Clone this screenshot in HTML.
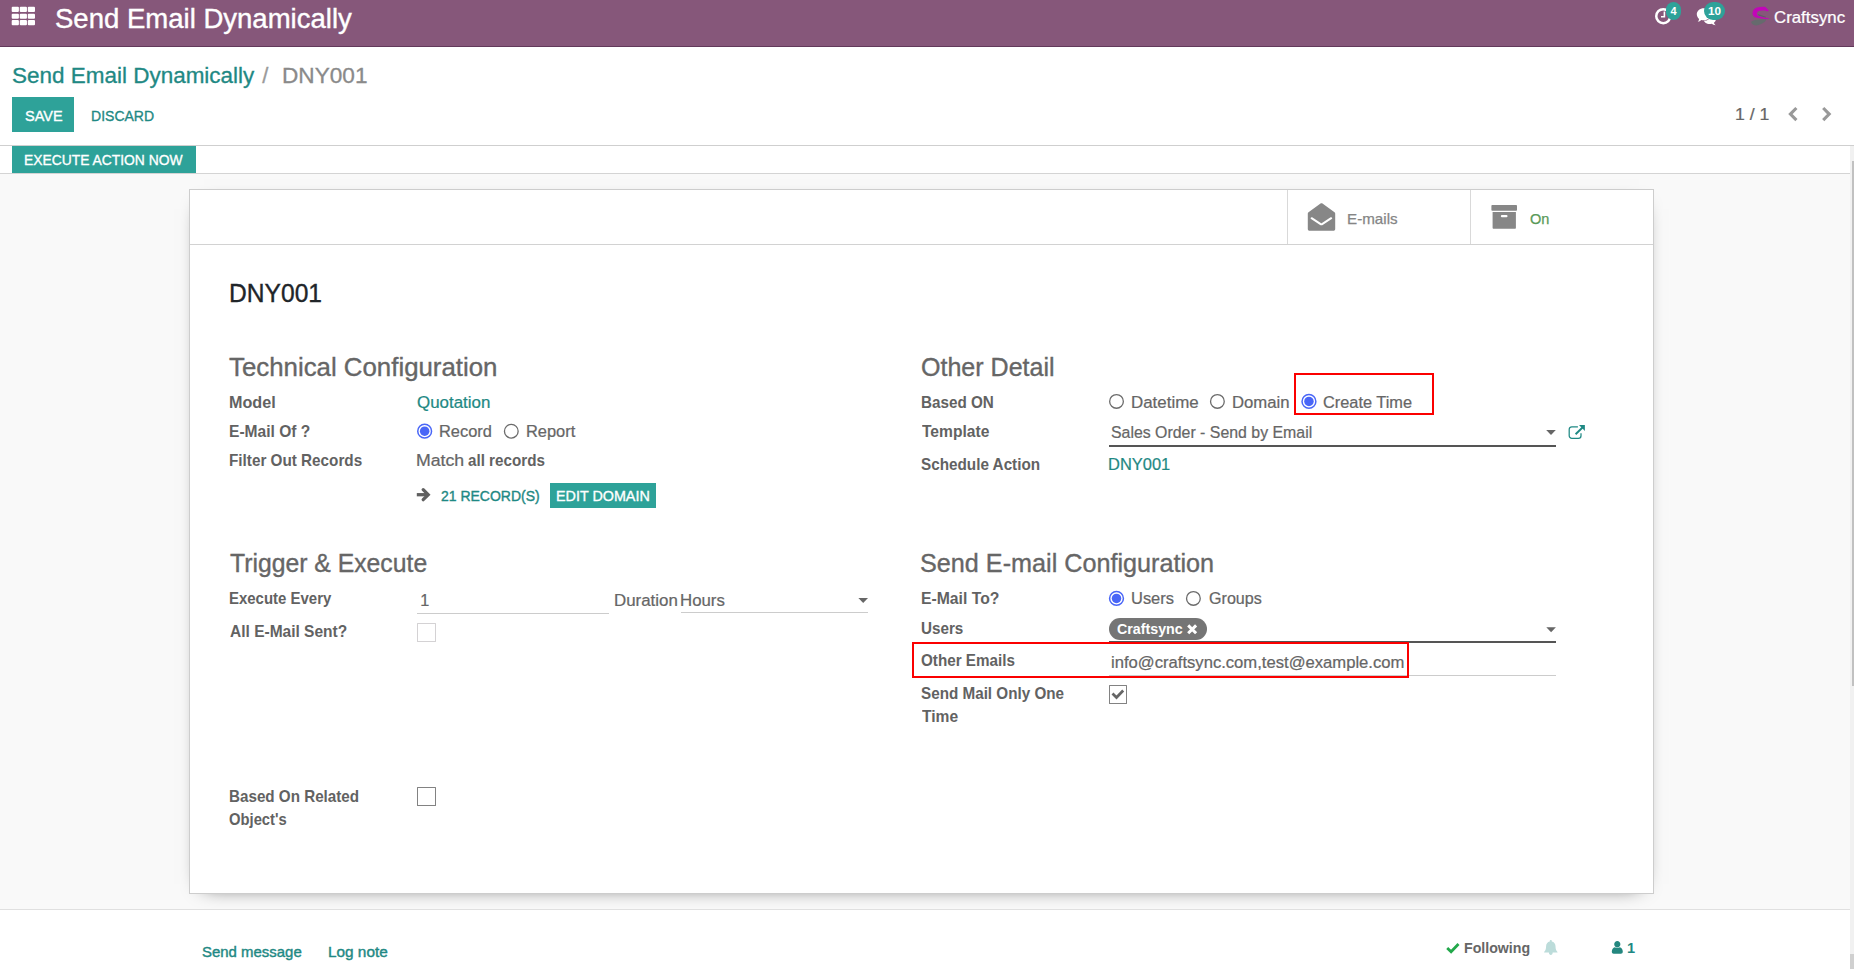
<!DOCTYPE html>
<html lang="en">
<head>
<meta charset="utf-8">
<title>DNY001 - Send Email Dynamically</title>
<style>
html,body{margin:0;padding:0;}
body{width:1854px;height:969px;overflow:hidden;position:relative;background:#f9f9f9;font-family:"Liberation Sans",sans-serif;color:#666;}
.abs{position:absolute;}
.t{position:absolute;white-space:pre;line-height:1;transform-origin:0 0;}
.navbar{left:0;top:0;width:1854px;height:46px;background:#86577a;border-bottom:1px solid #62395b;}
.cp{left:0;top:47px;width:1854px;height:98px;background:#fff;border-bottom:1px solid #cfcfcf;}
.sb{left:0;top:146px;width:1850px;height:27px;background:#fff;border-bottom:1px solid #d4d4d4;}
.btn{background:#2ea299;}
.sheet{left:189px;top:189px;width:1463px;height:703px;background:#fff;border:1px solid #cdcdcd;box-shadow:0 5px 20px -15px #000;}
.bbox{left:190px;top:190px;width:1463px;height:54px;border-bottom:1px solid #d2d2d2;}
.vline{width:1px;height:54px;top:190px;background:#d9d9d9;}
.chat{left:0;top:909px;width:1850px;height:60px;background:#fff;border-top:1px solid #e0e0e0;}
.track{left:1850px;top:146px;width:4px;height:823px;background:#f1f1f1;}
.thumb{left:1852px;top:161px;width:2px;height:525px;background:#c1c1c1;}
.corner{left:1850px;top:954px;width:4px;height:15px;background:#d0d0d0;}
.cb{width:17px;height:17px;border:1px solid #828282;background:#fff;border-radius:0.5px;}
.cb.dis{border-color:#d4d2d4;}
.uline{height:1px;background:#cccccc;}
.uline2{height:2px;background:#555555;}
.red{border:2px solid #fb0000;box-sizing:border-box;}
.badge{background:#2ea299;border-radius:9px;height:18px;top:2px;}
svg{position:absolute;overflow:visible;}
</style>
</head>
<body>
<!-- navbar -->
<div class="abs navbar"></div>
<svg style="left:0;top:0" width="50" height="46" viewBox="0 0 50 46"><g fill="#fff">
<rect x="11.7" y="6.8" width="7.2" height="5.1" rx="1"/><rect x="19.75" y="6.8" width="7.2" height="5.1" rx="1"/><rect x="27.8" y="6.8" width="7.2" height="5.1" rx="1"/>
<rect x="11.7" y="13.75" width="7.2" height="5.1" rx="1"/><rect x="19.75" y="13.75" width="7.2" height="5.1" rx="1"/><rect x="27.8" y="13.75" width="7.2" height="5.1" rx="1"/>
<rect x="11.7" y="20.1" width="7.2" height="5.1" rx="1"/><rect x="19.75" y="20.1" width="7.2" height="5.1" rx="1"/><rect x="27.8" y="20.1" width="7.2" height="5.1" rx="1"/>
</g></svg>
<!-- clock icon -->
<svg style="left:1650px;top:0" width="80" height="46" viewBox="1650 0 80 46">
<circle cx="1663.3" cy="16.2" r="7.05" fill="none" stroke="#fff" stroke-width="2.5"/>
<path d="M1663.600 11.600h1.600v6h-4.200v-1.500h2.600z" fill="#fff"/>
<!-- comments icon -->
<path d="M1709.800 14.400c3.400 0 6.100 2.100 6.100 4.800 0 1.500-.8 2.700-2 3.600.2.800.7 1.600 1.700 2.400-1.600-.1-2.900-.7-3.800-1.500-.6.200-1.300.300-2 .300-3.400 0-6.100-2.100-6.100-4.800s2.700-4.800 6.100-4.800z" fill="#fff"/>
<path d="M1703.800 8.300c3.900 0 7 2.700 7 6s-3.100 6-7 6c-.9 0-1.700-.1-2.500-.4-.9.900-2.100 1.600-3.600 1.900.9-.9 1.300-1.900 1.400-2.900-1.400-1.100-2.300-2.700-2.300-4.600 0-3.300 3.100-6 7-6z" fill="#fff" stroke="#86577a" stroke-width="1.100" paint-order="stroke"/>
</svg>
<div class="abs badge" style="left:1666px;width:15px;"></div>
<div class="abs badge" style="left:1704px;width:21px;"></div>
<!-- logo -->
<svg style="left:1745px;top:0" width="30" height="46" viewBox="1745 0 30 46">
<path d="M1751.100 22c.9-1.200 2.700-1.800 4.500-2.100 3.400-.5 7.400-.7 10.700-.6-.3 1.500-1.100 2.300-2.100 3-2.200 1.600-4.700 2.700-7.800 3.100-2.400.1-4.900-1.200-5.300-3.400z" fill="#666a6d"/>
<path d="M1758 14l7.900 2.700-.3 1-7.100-2.300z" fill="#5b6163"/>
<path d="M1765.400 6.900l3.500 3.700-1.900.9-1-.8c-3-.4-6-.1-8.100.8-1.100 1-1.300 3 0 4.100 2.100 1.200 5.600 2.200 11 2.800l-.2.500c-4.700.1-9.700-.3-13.100-1.300-2.400-1.100-3.400-2.800-3.100-4.600.3-2.500 1.500-4.200 3.600-5.200 2.900-.9 6.400-1.100 9.300-.9z" fill="#c206b8"/>
</svg>
<!-- control panel -->
<div class="abs cp"></div>
<div class="abs btn" style="left:12px;top:97px;width:62px;height:35px;"></div>
<!-- pager chevrons -->
<svg style="left:1780px;top:100px" width="60" height="30" viewBox="1780 100 60 30"><g fill="none" stroke="#999" stroke-width="3.1">
<path d="M1796.400 108l-6 6.100 6 6.100"/><path d="M1823.200 108l6 6.100-6 6.100"/></g></svg>
<!-- status bar -->
<div class="abs sb"></div>
<div class="abs btn" style="left:12px;top:146px;width:184px;height:27px;"></div>
<!-- scrollbar -->
<div class="abs track"></div><div class="abs thumb"></div><div class="abs corner"></div>
<!-- sheet -->
<div class="abs sheet"></div>
<div class="abs bbox"></div>
<div class="abs vline" style="left:1287px;"></div>
<div class="abs vline" style="left:1470px;"></div>
<!-- envelope-open -->
<svg style="left:1300px;top:195px" width="45" height="45" viewBox="1300 195 45 45">
<path d="M1307.800 213.600c0-.6.300-1.100.7-1.400l12-8.700c.6-.4 1.400-.4 2 0l12 8.700c.4.300.7.800.7 1.400v15.400c0 1-.8 1.800-1.800 1.800h-23.800c-1 0-1.800-.8-1.800-1.800z" fill="#878787"/>
<path d="M1311.600 218.200l8.700 5.700c.7.450 1.500.450 2.200 0l8.700-5.700" fill="none" stroke="#fff" stroke-width="2" stroke-linecap="round"/>
</svg>
<!-- archive -->
<svg style="left:1485px;top:195px" width="45" height="45" viewBox="1485 195 45 45">
<rect x="1491.400" y="205" width="25.600" height="5.800" rx="0.8" fill="#878787"/>
<path d="M1492.600 212.100h23.300v15.700c0 .6-.4 1-1 1h-21.300c-.6 0-1-.4-1-1z" fill="#878787"/>
<rect x="1500.900" y="215" width="6.600" height="2.300" rx="1" fill="#fff"/>
</svg>
<!-- radios left -->
<!-- radios -->
<svg style="left:0;top:0" width="1854" height="969" viewBox="0 0 1854 969"><circle cx="424.65" cy="431.2" r="6.900" fill="#fff" stroke="#4966f7" stroke-width="1.500"/><circle cx="424.65" cy="431.2" r="4.750" fill="#4966f7"/><circle cx="511.3" cy="431.2" r="6.850" fill="#fff" stroke="#6b6b6b" stroke-width="1.300"/><circle cx="1116.5" cy="401.4" r="6.850" fill="#fff" stroke="#6b6b6b" stroke-width="1.300"/><circle cx="1217.4" cy="401.4" r="6.850" fill="#fff" stroke="#6b6b6b" stroke-width="1.300"/><circle cx="1308.95" cy="401.4" r="6.900" fill="#fff" stroke="#4966f7" stroke-width="1.500"/><circle cx="1308.95" cy="401.4" r="4.750" fill="#4966f7"/><circle cx="1116.5" cy="598.4" r="6.900" fill="#fff" stroke="#4966f7" stroke-width="1.500"/><circle cx="1116.5" cy="598.4" r="4.750" fill="#4966f7"/><circle cx="1193.4" cy="598.4" r="6.850" fill="#fff" stroke="#6b6b6b" stroke-width="1.300"/></svg>
<!-- arrow right -->
<svg style="left:410px;top:485px" width="30" height="22" viewBox="410 485 30 22">
<path d="M416.800 494.700h10.500" fill="none" stroke="#606060" stroke-width="3.300"/>
<path d="M423.200 489.700l5 5-5 5" fill="none" stroke="#606060" stroke-width="3.300" stroke-linecap="round" stroke-linejoin="miter"/>
</svg>
<div class="abs btn" style="left:550px;top:483px;width:106px;height:25px;"></div>
<!-- trigger -->
<div class="abs uline" style="left:417px;top:613px;width:192px;"></div>
<div class="abs uline" style="left:681px;top:612px;width:187px;"></div>
<svg style="left:855px;top:595px" width="16" height="12" viewBox="855 595 16 12"><path d="M858.400 598h9.600l-4.800 4.900z" fill="#666"/></svg>
<div class="abs cb dis" style="left:417px;top:623px;"></div>
<div class="abs cb" style="left:417px;top:787px;"></div>
<!-- other detail -->
<div class="abs red" style="left:1294px;top:373px;width:140px;height:42px;"></div>
<div class="abs uline2" style="left:1109px;top:445px;width:447px;"></div>
<svg style="left:1540px;top:425px" width="16" height="12" viewBox="1540 425 16 12"><path d="M1546.200 430h9.600l-4.800 4.900z" fill="#666"/></svg>
<!-- external link -->
<svg style="left:1565px;top:420px" width="25" height="22" viewBox="1565 420 25 22">
<path d="M1577.900 426.800H1571.800A2.600 2.600 0 0 0 1569.200 429.400V435.700A2.600 2.600 0 0 0 1571.800 438.300H1578.400A2.600 2.600 0 0 0 1581 435.700V433.200" fill="none" stroke="#1f8984" stroke-width="1.250"/>
<path d="M1575.600 434.200L1582.500 427.500" fill="none" stroke="#1f8984" stroke-width="1.900"/>
<path d="M1579 425.100h5.900v5.800z" fill="#1f8984"/>
</svg>
<!-- send config -->
<div class="abs" style="left:1108.800px;top:618px;width:98.200px;height:22px;border-radius:11px;background:#757575;"></div>
<svg style="left:1185px;top:620px" width="16" height="18" viewBox="1185 620 16 18"><path d="M1188.200 625.400l7.900 7.900M1196.100 625.400l-7.900 7.900" stroke="#fff" stroke-width="3" fill="none"/></svg>
<div class="abs uline2" style="left:1109px;top:641px;width:447px;"></div>
<svg style="left:1540px;top:622px" width="16" height="12" viewBox="1540 622 16 12"><path d="M1546.300 627.300h9.600l-4.800 4.900z" fill="#666"/></svg>
<div class="abs uline" style="left:1109px;top:675px;width:447px;"></div>
<div class="abs red" style="left:912px;top:642px;width:497px;height:36px;"></div>
<div class="abs cb" style="left:1109px;top:685px;width:16px;"></div>
<svg style="left:1109px;top:685px" width="19" height="19" viewBox="0 0 19 19"><path d="M3.500 8.500l4 4 6.700-7" fill="none" stroke="#666" stroke-width="2.700"/></svg>
<!-- chatter -->
<div class="abs chat"></div>
<svg style="left:1440px;top:935px" width="200" height="30" viewBox="1440 935 200 30">
<path d="M1447.200 948l3.900 3.800 7.400-7.800" fill="none" stroke="#22a84a" stroke-width="2.800"/>
<path d="M1550.800 940c.6 0 1 .4 1 1v.4c2.300.5 3.700 2.400 3.700 4.800 0 3.200.9 4.700 2 5.700v.7h-13.400v-.7c1.100-1 2-2.500 2-5.700 0-2.400 1.400-4.300 3.700-4.800v-.4c0-.6.400-1 1-1zM1548.900 952.600h3.800c0 1.500-.8 2.500-1.900 2.500s-1.900-1-1.900-2.500z" fill="#bcdcda"/>
<path d="M1617.300 947.400c-1.700 0-3.100-1.400-3.100-3.200s1.400-3.200 3.100-3.200 3.100 1.400 3.100 3.200-1.400 3.200-3.100 3.200zM1611.800 951.800c0-2.500 1.300-4.300 3-4.500.7.500 1.500.8 2.500.8s1.800-.3 2.500-.8c1.700.2 3 2 3 4.500 0 1.200-.8 1.900-1.900 1.900h-7.200c-1.100 0-1.900-.7-1.900-1.900z" fill="#24877f"/>
</svg>
<div class="t" id="brand" style="left:55.33px;top:6.00px;font-size:27px;font-weight:normal;color:#ffffff;transform:scaleX(1.0195);-webkit-text-stroke:0.38px #ffffff;">Send Email Dynamically</div>
<div class="t" id="user" style="left:1774.22px;top:9.00px;font-size:16.25px;font-weight:normal;color:#ffffff;transform:scaleX(1.0356);-webkit-text-stroke:0.23px #ffffff;">Craftsync</div>
<div class="t" id="bc1" style="left:11.88px;top:65.00px;font-size:22px;font-weight:normal;color:#1f8984;transform:scaleX(1.0216);-webkit-text-stroke:0.31px #1f8984;">Send Email Dynamically</div>
<div class="t" id="bcs" style="left:262.30px;top:65.00px;font-size:22px;font-weight:normal;color:#9a9a9a;transform:scaleX(1.0000);-webkit-text-stroke:0.31px #9a9a9a;">/</div>
<div class="t" id="bc2" style="left:281.50px;top:65.00px;font-size:22px;font-weight:normal;color:#8a8a8a;transform:scaleX(1.0280);-webkit-text-stroke:0.31px #8a8a8a;">DNY001</div>
<div class="t" id="save" style="left:24.70px;top:109.00px;font-size:14.6px;font-weight:normal;color:#ffffff;transform:scaleX(0.9919);-webkit-text-stroke:0.35px #fff;">SAVE</div>
<div class="t" id="discard" style="left:90.74px;top:109.00px;font-size:14.6px;font-weight:normal;color:#1f8984;transform:scaleX(0.9609);-webkit-text-stroke:0.35px #1f8984;">DISCARD</div>
<div class="t" id="pager" style="left:1735.44px;top:106.00px;font-size:16.25px;font-weight:normal;color:#666666;transform:scaleX(1.0864);-webkit-text-stroke:0.23px #666666;">1 / 1</div>
<div class="t" id="exec" style="left:24.25px;top:153.00px;font-size:14.6px;font-weight:normal;color:#ffffff;transform:scaleX(0.9492);-webkit-text-stroke:0.35px #fff;">EXECUTE ACTION NOW</div>
<div class="t" id="emails" style="left:1347.10px;top:212.00px;font-size:14.6px;font-weight:normal;color:#858585;transform:scaleX(1.0404);-webkit-text-stroke:0.25px #858585;">E-mails</div>
<div class="t" id="on" style="left:1530.05px;top:212.00px;font-size:14.6px;font-weight:normal;color:#5a9a59;transform:scaleX(0.9972);-webkit-text-stroke:0.25px #5a9a59;">On</div>
<div class="t" id="title" style="left:228.97px;top:281.00px;font-size:25.5px;font-weight:normal;color:#212529;transform:scaleX(0.9651);-webkit-text-stroke:0.36px #212529;">DNY001</div>
<div class="t" id="h_tech" style="left:229.48px;top:355.00px;font-size:25px;font-weight:normal;color:#666666;transform:scaleX(1.0330);-webkit-text-stroke:0.35px #666666;">Technical Configuration</div>
<div class="t" id="h_other" style="left:920.50px;top:355.00px;font-size:25px;font-weight:normal;color:#666666;transform:scaleX(1.0019);-webkit-text-stroke:0.35px #666666;">Other Detail</div>
<div class="t" id="h_trig" style="left:229.51px;top:551.00px;font-size:25px;font-weight:normal;color:#666666;transform:scaleX(0.9899);-webkit-text-stroke:0.35px #666666;">Trigger &amp; Execute</div>
<div class="t" id="h_send" style="left:920.49px;top:551.00px;font-size:25px;font-weight:normal;color:#666666;transform:scaleX(1.0078);-webkit-text-stroke:0.35px #666666;">Send E-mail Configuration</div>
<div class="t" id="l_model" style="left:229.01px;top:394.00px;font-size:16.25px;font-weight:bold;color:#626262;transform:scaleX(0.9944);">Model</div>
<div class="t" id="l_emailof" style="left:229.04px;top:423.00px;font-size:16.25px;font-weight:bold;color:#626262;transform:scaleX(0.9578);">E-Mail Of ?</div>
<div class="t" id="l_filter" style="left:229.06px;top:452.00px;font-size:16.25px;font-weight:bold;color:#626262;transform:scaleX(0.9393);">Filter Out Records</div>
<div class="t" id="l_exec" style="left:229.08px;top:590.00px;font-size:16.25px;font-weight:bold;color:#626262;transform:scaleX(0.9205);">Execute Every</div>
<div class="t" id="l_allsent" style="left:229.52px;top:623.00px;font-size:16.25px;font-weight:bold;color:#626262;transform:scaleX(0.9546);">All E-Mail Sent?</div>
<div class="t" id="l_based1" style="left:229.21px;top:788.00px;font-size:16.25px;font-weight:bold;color:#626262;transform:scaleX(0.9354);">Based On Related</div>
<div class="t" id="l_based2" style="left:229.32px;top:811.00px;font-size:16.25px;font-weight:bold;color:#626262;transform:scaleX(0.9097);">Object&#x27;s</div>
<div class="t" id="l_basedon" style="left:920.81px;top:394.00px;font-size:16.25px;font-weight:bold;color:#626262;transform:scaleX(0.9371);">Based ON</div>
<div class="t" id="l_tmpl" style="left:921.51px;top:423.00px;font-size:16.25px;font-weight:bold;color:#626262;transform:scaleX(0.9603);">Template</div>
<div class="t" id="l_sched" style="left:921.28px;top:456.00px;font-size:16.25px;font-weight:bold;color:#626262;transform:scaleX(0.9401);">Schedule Action</div>
<div class="t" id="l_emailto" style="left:920.78px;top:590.00px;font-size:16.25px;font-weight:bold;color:#626262;transform:scaleX(0.9684);">E-Mail To?</div>
<div class="t" id="l_users" style="left:920.81px;top:620.00px;font-size:16.25px;font-weight:bold;color:#626262;transform:scaleX(0.9368);">Users</div>
<div class="t" id="l_other" style="left:921.05px;top:652.00px;font-size:16.25px;font-weight:bold;color:#626262;transform:scaleX(0.9367);">Other Emails</div>
<div class="t" id="l_once1" style="left:921.28px;top:685.00px;font-size:16.25px;font-weight:bold;color:#626262;transform:scaleX(0.9373);">Send Mail Only One</div>
<div class="t" id="l_once2" style="left:921.51px;top:708.00px;font-size:16.25px;font-weight:bold;color:#626262;transform:scaleX(0.9592);">Time</div>
<div class="t" id="v_quot" style="left:416.72px;top:394.00px;font-size:16.25px;font-weight:normal;color:#1f8984;transform:scaleX(1.0400);-webkit-text-stroke:0.23px #1f8984;">Quotation</div>
<div class="t" id="v_record" style="left:439.49px;top:423.00px;font-size:16.25px;font-weight:normal;color:#666666;transform:scaleX(1.0100);-webkit-text-stroke:0.23px #666666;">Record</div>
<div class="t" id="v_report" style="left:526.24px;top:423.00px;font-size:16.25px;font-weight:normal;color:#666666;transform:scaleX(1.0105);-webkit-text-stroke:0.23px #666666;">Report</div>
<div class="t" id="v_match" style="left:416.14px;top:452.00px;font-size:16.25px;font-weight:normal;color:#666666;transform:scaleX(1.0893);-webkit-text-stroke:0.23px #666666;">Match</div>
<div class="t" id="v_allrec" style="left:468.28px;top:452.00px;font-size:16.25px;font-weight:bold;color:#626262;transform:scaleX(0.9352);">all records</div>
<div class="t" id="v_21" style="left:441.22px;top:489.00px;font-size:14.6px;font-weight:normal;color:#1f8984;transform:scaleX(0.9582);-webkit-text-stroke:0.4px #1f8984;">21 RECORD(S)</div>
<div class="t" id="v_edit" style="left:556.32px;top:489.00px;font-size:14.6px;font-weight:normal;color:#ffffff;transform:scaleX(0.9829);-webkit-text-stroke:0.35px #fff;">EDIT DOMAIN</div>
<div class="t" id="v_one" style="left:420.25px;top:592.00px;font-size:16.25px;font-weight:normal;color:#666666;transform:scaleX(1.0000);-webkit-text-stroke:0.23px #666666;">1</div>
<div class="t" id="v_dur" style="left:614.40px;top:592.00px;font-size:16.25px;font-weight:normal;color:#666666;transform:scaleX(1.0390);-webkit-text-stroke:0.23px #666666;">Duration</div>
<div class="t" id="v_hours" style="left:680.11px;top:592.00px;font-size:16.25px;font-weight:normal;color:#666666;transform:scaleX(1.0337);-webkit-text-stroke:0.23px #666666;">Hours</div>
<div class="t" id="v_dt" style="left:1130.70px;top:394.00px;font-size:16.25px;font-weight:normal;color:#666666;transform:scaleX(1.0397);-webkit-text-stroke:0.23px #666666;">Datetime</div>
<div class="t" id="v_dom" style="left:1231.97px;top:394.00px;font-size:16.25px;font-weight:normal;color:#666666;transform:scaleX(1.0279);-webkit-text-stroke:0.23px #666666;">Domain</div>
<div class="t" id="v_ct" style="left:1323.25px;top:394.00px;font-size:16.25px;font-weight:normal;color:#666666;transform:scaleX(1.0057);-webkit-text-stroke:0.23px #666666;">Create Time</div>
<div class="t" id="v_sales" style="left:1110.97px;top:424.00px;font-size:16.25px;font-weight:normal;color:#666666;transform:scaleX(0.9770);-webkit-text-stroke:0.23px #666666;">Sales Order - Send by Email</div>
<div class="t" id="v_dny" style="left:1107.98px;top:456.00px;font-size:16.25px;font-weight:normal;color:#1f8984;transform:scaleX(1.0126);-webkit-text-stroke:0.23px #1f8984;">DNY001</div>
<div class="t" id="v_users" style="left:1130.73px;top:590.00px;font-size:16.25px;font-weight:normal;color:#666666;transform:scaleX(1.0123);-webkit-text-stroke:0.23px #666666;">Users</div>
<div class="t" id="v_groups" style="left:1208.51px;top:590.00px;font-size:16.25px;font-weight:normal;color:#666666;transform:scaleX(0.9904);-webkit-text-stroke:0.23px #666666;">Groups</div>
<div class="t" id="v_tag" style="left:1117.01px;top:622.00px;font-size:14.6px;font-weight:bold;color:#ffffff;transform:scaleX(0.9766);">Craftsync</div>
<div class="t" id="v_mail" style="left:1110.68px;top:654.00px;font-size:16.25px;font-weight:normal;color:#666666;transform:scaleX(1.0230);-webkit-text-stroke:0.23px #666666;">info@craftsync.com,test@example.com</div>
<div class="t" id="c_send" style="left:201.89px;top:945.00px;font-size:14.6px;font-weight:normal;color:#1f8984;transform:scaleX(1.0244);-webkit-text-stroke:0.4px #1f8984;">Send message</div>
<div class="t" id="c_log" style="left:328.05px;top:945.00px;font-size:14.6px;font-weight:normal;color:#1f8984;transform:scaleX(1.0516);-webkit-text-stroke:0.4px #1f8984;">Log note</div>
<div class="t" id="c_fol" style="left:1463.83px;top:941.00px;font-size:14.6px;font-weight:bold;color:#666666;transform:scaleX(0.9712);">Following</div>
<div class="t" id="c_one" style="left:1626.92px;top:941.00px;font-size:14.6px;font-weight:bold;color:#1f8984;transform:scaleX(1.0000);">1</div>
<div class="t" id="b4" style="left:1670.42px;top:6.00px;font-size:11px;font-weight:bold;color:#ffffff;transform:scaleX(1.0000);">4</div>
<div class="t" id="b10" style="left:1708.30px;top:6.00px;font-size:11px;font-weight:bold;color:#ffffff;transform:scaleX(1.0636);">10</div>
</body>
</html>
